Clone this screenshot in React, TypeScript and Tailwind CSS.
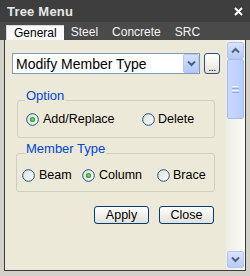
import React from "react";

function Radio({ checked }: { checked?: boolean }) {
  return (
    <svg width="13" height="13" viewBox="0 0 13 13" className="shrink-0">
      <defs>
        <linearGradient id="rg" x1="0" y1="0" x2="1" y2="1">
          <stop offset="0" stopColor="#dcdcd6" />
          <stop offset="1" stopColor="#ffffff" />
        </linearGradient>
      </defs>
      <circle cx="6.5" cy="6.5" r="5.8" fill="url(#rg)" stroke="#1c5180" strokeWidth="1" />
      {checked && (
        <>
          <circle cx="6.5" cy="6.5" r="2.6" fill="#2aa52a" />
          <circle cx="6.5" cy="6.5" r="1.2" fill="#7fe07f" />
        </>
      )}
    </svg>
  );
}

function Chevron({ up }: { up?: boolean }) {
  return (
    <svg width="9" height="7" viewBox="0 0 9 7">
      <path
        d={up ? "M1 5.5 L4.5 2 L8 5.5" : "M1 1.5 L4.5 5 L8 1.5"}
        fill="none"
        stroke="#4d6185"
        strokeWidth="2"
      />
    </svg>
  );
}

export default function App() {
  return (
    <div
      className="w-[250px] h-[276px] flex flex-col bg-[#d4d1cb] overflow-hidden"
      style={{ fontFamily: '"Liberation Sans", Arial, sans-serif' }}
    >
      {/* title bar */}
      <div className="h-[22px] bg-[#3e3e3e] flex items-center justify-between pl-[7px] pr-[7px]">
        <span className="text-[13px] font-bold text-[#e8e8e8] leading-[15px] tracking-[0.2px]">Tree Menu</span>
        <svg width="9" height="9" viewBox="0 0 9 9">
          <path d="M1 1 L8 8 M8 1 L1 8" stroke="#ffffff" strokeWidth="2" />
        </svg>
      </div>
      {/* tab bar */}
      <div className="h-[18px] bg-[#4a4a4a] flex items-end pl-[6px] text-[12px] leading-[15px]">
        <div className="h-[15px] px-[7px] bg-[#fbfbfd] text-black border-t border-l border-[#d8d8d8]">General</div>
        <div className="h-[15px] px-[7px] text-[#f4f4f4]">Steel</div>
        <div className="h-[15px] px-[7px] text-[#f4f4f4]">Concrete</div>
        <div className="h-[15px] px-[7px] text-[#f4f4f4]">SRC</div>
      </div>
      {/* body */}
      <div className="flex-1 px-[4px] pb-[5px]">
        <div className="h-full flex border-l border-r border-b border-[#3a3a3a]">
          {/* content */}
          <div className="flex-1 bg-[#ece9d8] flex flex-col">
            <div className="mt-[13px] ml-[7px] flex gap-[4px]">
              <div className="w-[188px] h-[21px] bg-white border border-[#7f9db9] flex items-center justify-between">
                <span className="pl-[3px] text-[14px] leading-[16px] text-black">Modify Member Type</span>
                <div className="w-[16px] h-[19px] bg-gradient-to-b from-[#d3e0fd] to-[#b4c8f6] border border-[#b2c6f2] rounded-[2px] flex items-center justify-center">
                  <Chevron />
                </div>
              </div>
              <div className="w-[16px] h-[21px] bg-gradient-to-b from-white to-[#e6e3d6] border border-[#2c4f8a] rounded-[3px] flex items-end justify-center">
                <span className="text-[11px] leading-[12px] text-black tracking-[-0.5px]">...</span>
              </div>
            </div>

            {/* Option group */}
            <div className="relative mt-[26px] ml-[12px] mr-[11px] h-[38px] border border-[#d0d0bf] rounded-[3px] pl-[8px] pt-[11px]">
              <span className="absolute -top-[13px] left-[7px] px-[1px] bg-[#ece9d8] text-[13px] leading-[15px] text-[#0046d5]">Option</span>
              <div className="flex items-center h-[15px] text-[12.5px] leading-[15px] text-black">
                <div className="w-[116px] flex items-center gap-[4px]">
                  <Radio checked />
                  <span>Add/Replace</span>
                </div>
                <div className="flex items-center gap-[3px]">
                  <Radio />
                  <span>Delete</span>
                </div>
              </div>
            </div>

            {/* Member Type group */}
            <div className="relative mt-[15px] ml-[11px] mr-[11px] h-[39px] border border-[#d0d0bf] rounded-[3px] pl-[5px] pt-[14px]">
              <span className="absolute -top-[13px] left-[8px] px-[1px] bg-[#ece9d8] text-[13px] leading-[15px] text-[#0046d5]">Member Type</span>
              <div className="flex items-center h-[15px] text-[12.5px] leading-[15px] text-black">
                <div className="w-[60px] flex items-center gap-[4px]">
                  <Radio />
                  <span>Beam</span>
                </div>
                <div className="w-[75px] flex items-center gap-[4px]">
                  <Radio checked />
                  <span>Column</span>
                </div>
                <div className="flex items-center gap-[3px]">
                  <Radio />
                  <span>Brace</span>
                </div>
              </div>
            </div>

            {/* buttons */}
            <div className="mt-[14px] mr-[12px] flex justify-end gap-[10px]">
              <div className="w-[55px] h-[18px] border border-[#003c74] rounded-[3px] bg-gradient-to-b from-white to-[#e3e1d8] flex items-center justify-center text-[12.5px] leading-[14px] text-black">
                Apply
              </div>
              <div className="w-[55px] h-[18px] border border-[#003c74] rounded-[3px] bg-gradient-to-b from-white to-[#e3e1d8] flex items-center justify-center text-[12.5px] leading-[14px] text-black">
                Close
              </div>
            </div>
          </div>
          {/* scrollbar */}
          <div className="w-[19px] bg-gradient-to-r from-[#eeede5] to-[#fbfbf8] flex flex-col px-[1px] pt-[2px] pb-[2px]">
            <div className="h-[17px] rounded-[2px] border border-[#b4c6f0] bg-gradient-to-b from-[#d8e4fd] to-[#b8cbf7] flex items-center justify-center">
              <Chevron up />
            </div>
            <div className="h-[60px] rounded-[2px] border border-[#a5bcf3] bg-gradient-to-r from-[#c9d8fc] to-[#b9cdfb] flex flex-col items-center justify-center gap-[1px]">
              <div className="w-[7px] h-[1px] bg-[#eef4fe]" />
              <div className="w-[7px] h-[1px] bg-[#8caef3]" />
              <div className="w-[7px] h-[1px] bg-[#eef4fe]" />
              <div className="w-[7px] h-[1px] bg-[#8caef3]" />
            </div>
            <div className="flex-1" />
            <div className="h-[17px] rounded-[2px] border border-[#b4c6f0] bg-gradient-to-b from-[#d8e4fd] to-[#b8cbf7] flex items-center justify-center">
              <Chevron />
            </div>
          </div>
        </div>
      </div>
    </div>
  );
}
